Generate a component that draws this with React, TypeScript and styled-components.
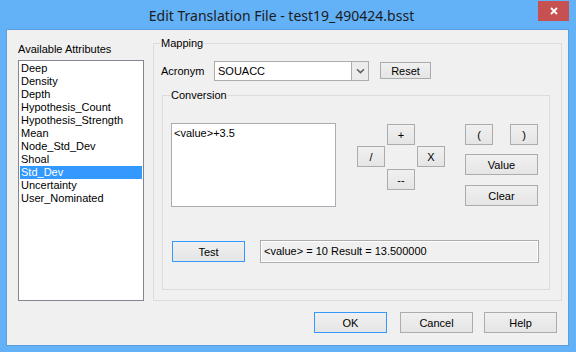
import styled, { createGlobalStyle, css } from "styled-components";

const attributes = [
  "Deep",
  "Density",
  "Depth",
  "Hypothesis_Count",
  "Hypothesis_Strength",
  "Mean",
  "Node_Std_Dev",
  "Shoal",
  "Std_Dev",
  "Uncertainty",
  "User_Nominated",
];

const GlobalStyle = createGlobalStyle`
  html, body {
    margin: 0;
    padding: 0;
  }
  body {
    width: 576px;
    height: 352px;
    overflow: hidden;
    font-family: "Liberation Sans", Arial, sans-serif;
    font-size: 11px;
    color: #000;
  }
`;

const App = () => {
  return (
    <>
      <GlobalStyle />
      <StyledWindow>
        <StyledTitleBar>
          <StyledTitle>Edit Translation File - test19_490424.bsst</StyledTitle>
          <StyledClose>
            <svg width="8" height="8" viewBox="0 0 8 8">
              <path d="M1 1L7 7M7 1L1 7" stroke="#fff" strokeWidth="1.8" />
            </svg>
          </StyledClose>
        </StyledTitleBar>

        <StyledClient>
          <StyledTopRow>
            {/*/// Attribute list ///////////////////////////////////// */}
            <StyledLeftCol>
              <StyledLabel>Available Attributes</StyledLabel>
              <StyledList>
                {attributes.map((attr) => (
                  <StyledListItem key={attr} $selected={attr === "Std_Dev"}>
                    {attr}
                  </StyledListItem>
                ))}
              </StyledList>
            </StyledLeftCol>

            {/*/// Mapping group ///////////////////////////////////// */}
            <StyledMapping>
              <StyledLegend>Mapping</StyledLegend>
              <StyledAcronymRow>
                <StyledAcronymLabel>Acronym</StyledAcronymLabel>
                <StyledCombo>
                  <StyledComboText>SOUACC</StyledComboText>
                  <StyledComboArrow>
                    <svg width="9" height="6" viewBox="0 0 9 6">
                      <path
                        d="M1 1.2L4.5 4.6L8 1.2"
                        stroke="#5f5f5f"
                        strokeWidth="1.5"
                        fill="none"
                      />
                    </svg>
                  </StyledComboArrow>
                </StyledCombo>
                <StyledButton $w={51} $h={17} $ml={11} $mt={1}>
                  Reset
                </StyledButton>
              </StyledAcronymRow>

              <StyledConversion>
                <StyledLegend>Conversion</StyledLegend>
                <StyledMainRow>
                  <StyledMemo>&lt;value&gt;+3.5</StyledMemo>
                  <StyledCalcPad>
                    <StyledButton $w={28} $h={21} $col={2} $row={1}>
                      +
                    </StyledButton>
                    <StyledButton $w={28} $h={21} $col={1} $row={2}>
                      /
                    </StyledButton>
                    <StyledButton $w={28} $h={21} $col={3} $row={2}>
                      X
                    </StyledButton>
                    <StyledButton $w={28} $h={21} $col={2} $row={3}>
                      --
                    </StyledButton>
                  </StyledCalcPad>
                  <StyledRightCol>
                    <StyledParenRow>
                      <StyledButton $w={28} $h={21}>
                        (
                      </StyledButton>
                      <StyledButton $w={28} $h={21}>
                        )
                      </StyledButton>
                    </StyledParenRow>
                    <StyledButton $w={73} $h={21} $mt={9}>
                      Value
                    </StyledButton>
                    <StyledButton $w={73} $h={21} $mt={10}>
                      Clear
                    </StyledButton>
                  </StyledRightCol>
                </StyledMainRow>

                <StyledTestRow>
                  <StyledButton $w={73} $h={21} $ml={1} $mt={1} $default>
                    Test
                  </StyledButton>
                  <StyledResult>&lt;value&gt; = 10 Result = 13.500000</StyledResult>
                </StyledTestRow>
              </StyledConversion>
            </StyledMapping>
          </StyledTopRow>

          {/*/// Dialog buttons ///////////////////////////////////// */}
          <StyledDialogButtons>
            <StyledButton $w={73} $h={21} $default>
              OK
            </StyledButton>
            <StyledButton $w={73} $h={21} $ml={13}>
              Cancel
            </StyledButton>
            <StyledButton $w={73} $h={21} $ml={11}>
              Help
            </StyledButton>
          </StyledDialogButtons>
        </StyledClient>
      </StyledWindow>
    </>
  );
};

export default App;

const StyledWindow = styled.div`
  width: 576px;
  height: 352px;
  background: #63b1f7;
  display: flex;
  flex-direction: column;
`;

const StyledTitleBar = styled.div`
  height: 30px;
  display: flex;
  align-items: flex-start;
`;

const StyledTitle = styled.div`
  flex: 1;
  padding-left: 25px;
  text-align: center;
  line-height: 32px;
  font-family: "Noto Sans", "Open Sans", sans-serif;
  font-size: 14px;
  color: #1c1c1c;
`;

const StyledClose = styled.div`
  width: 31px;
  height: 20px;
  margin-top: 1px;
  margin-right: 7px;
  background: #c75050;
  display: flex;
  align-items: center;
  justify-content: center;
`;

const StyledClient = styled.div`
  flex: 1;
  margin: 0 8px 7px 7px;
  padding: 7px 6px 0 11px;
  background: #f0f0f0;
  outline: 1px solid #5a9edf;
  display: flex;
  flex-direction: column;
`;

const StyledTopRow = styled.div`
  display: flex;
  align-items: flex-start;
  height: 264px;
`;

const StyledLeftCol = styled.div`
  width: 126px;
  padding-top: 6px;
  display: flex;
  flex-direction: column;
`;

const StyledLabel = styled.div`
  line-height: 13px;
  margin-bottom: 4px;
`;

const StyledList = styled.div`
  box-sizing: border-box;
  height: 241px;
  padding: 1px;
  background: #fff;
  border: 1px solid #828790;
`;

const StyledListItem = styled.div<{ $selected?: boolean }>`
  line-height: 13px;
  padding-left: 1px;
  white-space: nowrap;
  ${({ $selected }) =>
    $selected &&
    css`
      background: #3399ff;
      color: #fff;
    `}
`;

const StyledMapping = styled.fieldset`
  box-sizing: border-box;
  width: 409px;
  height: 264px;
  min-width: 0;
  margin: 0 0 0 9px;
  padding: 11px 0 0 7px;
  border: 1px solid #dcdcdc;
`;

const StyledLegend = styled.legend`
  padding: 0 1px;
  margin-left: -1px;
  line-height: 13px;
  font-size: 11px;
`;

const StyledAcronymRow = styled.div`
  display: flex;
  align-items: flex-start;
`;

const StyledAcronymLabel = styled.div`
  width: 53px;
  line-height: 20px;
`;

const StyledCombo = styled.div`
  box-sizing: border-box;
  width: 155px;
  height: 20px;
  display: flex;
  background: #fff;
  border: 1px solid #acacac;
`;

const StyledComboText = styled.div`
  flex: 1;
  padding-left: 3px;
  line-height: 18px;
`;

const StyledComboArrow = styled.div`
  width: 16px;
  background: #ececec;
  border-left: 1px solid #acacac;
  display: flex;
  align-items: center;
  justify-content: center;
`;

const StyledButton = styled.div<{
  $w: number;
  $h: number;
  $ml?: number;
  $mt?: number;
  $col?: number;
  $row?: number;
  $default?: boolean;
}>`
  box-sizing: border-box;
  width: ${({ $w }) => $w}px;
  height: ${({ $h }) => $h}px;
  margin-left: ${({ $ml }) => $ml ?? 0}px;
  margin-top: ${({ $mt }) => $mt ?? 0}px;
  display: flex;
  align-items: center;
  justify-content: center;
  background: linear-gradient(#f0f0f0, #e5e5e5);
  border: 1px solid ${({ $default }) => ($default ? "#3399ff" : "#acacac")};
  ${({ $col, $row }) =>
    $col &&
    css`
      grid-column: ${$col};
      grid-row: ${$row};
    `}
`;

const StyledConversion = styled.fieldset`
  box-sizing: border-box;
  width: 388px;
  height: 201px;
  min-width: 0;
  margin: 8px 0 0 1px;
  padding: 21px 0 0 8px;
  border: 1px solid #dcdcdc;
`;

const StyledMainRow = styled.div`
  display: flex;
  align-items: flex-start;
`;

const StyledMemo = styled.div`
  box-sizing: border-box;
  width: 165px;
  height: 84px;
  padding: 3px 2px;
  line-height: 13px;
  background: #fff;
  border: 1px solid #abadb3;
`;

const StyledCalcPad = styled.div`
  display: grid;
  grid-template-columns: repeat(3, 28px);
  grid-template-rows: 22px 23px 21px;
  column-gap: 2px;
  margin-left: 21px;
  margin-top: 1px;
`;

const StyledRightCol = styled.div`
  width: 73px;
  margin-left: 20px;
  margin-top: 1px;
  display: flex;
  flex-direction: column;
`;

const StyledParenRow = styled.div`
  display: flex;
  justify-content: space-between;
`;

const StyledTestRow = styled.div`
  display: flex;
  align-items: flex-start;
  margin-top: 33px;
`;

const StyledResult = styled.div`
  box-sizing: border-box;
  width: 279px;
  height: 23px;
  margin-left: 15px;
  padding-left: 3px;
  line-height: 21px;
  background: #f0f0f0;
  border: 1px solid #acacac;
  box-shadow: inset 0 0 0 1px #fff;
`;

const StyledDialogButtons = styled.div`
  display: flex;
  justify-content: flex-end;
  margin-top: 11px;
  padding-right: 5px;
`;
